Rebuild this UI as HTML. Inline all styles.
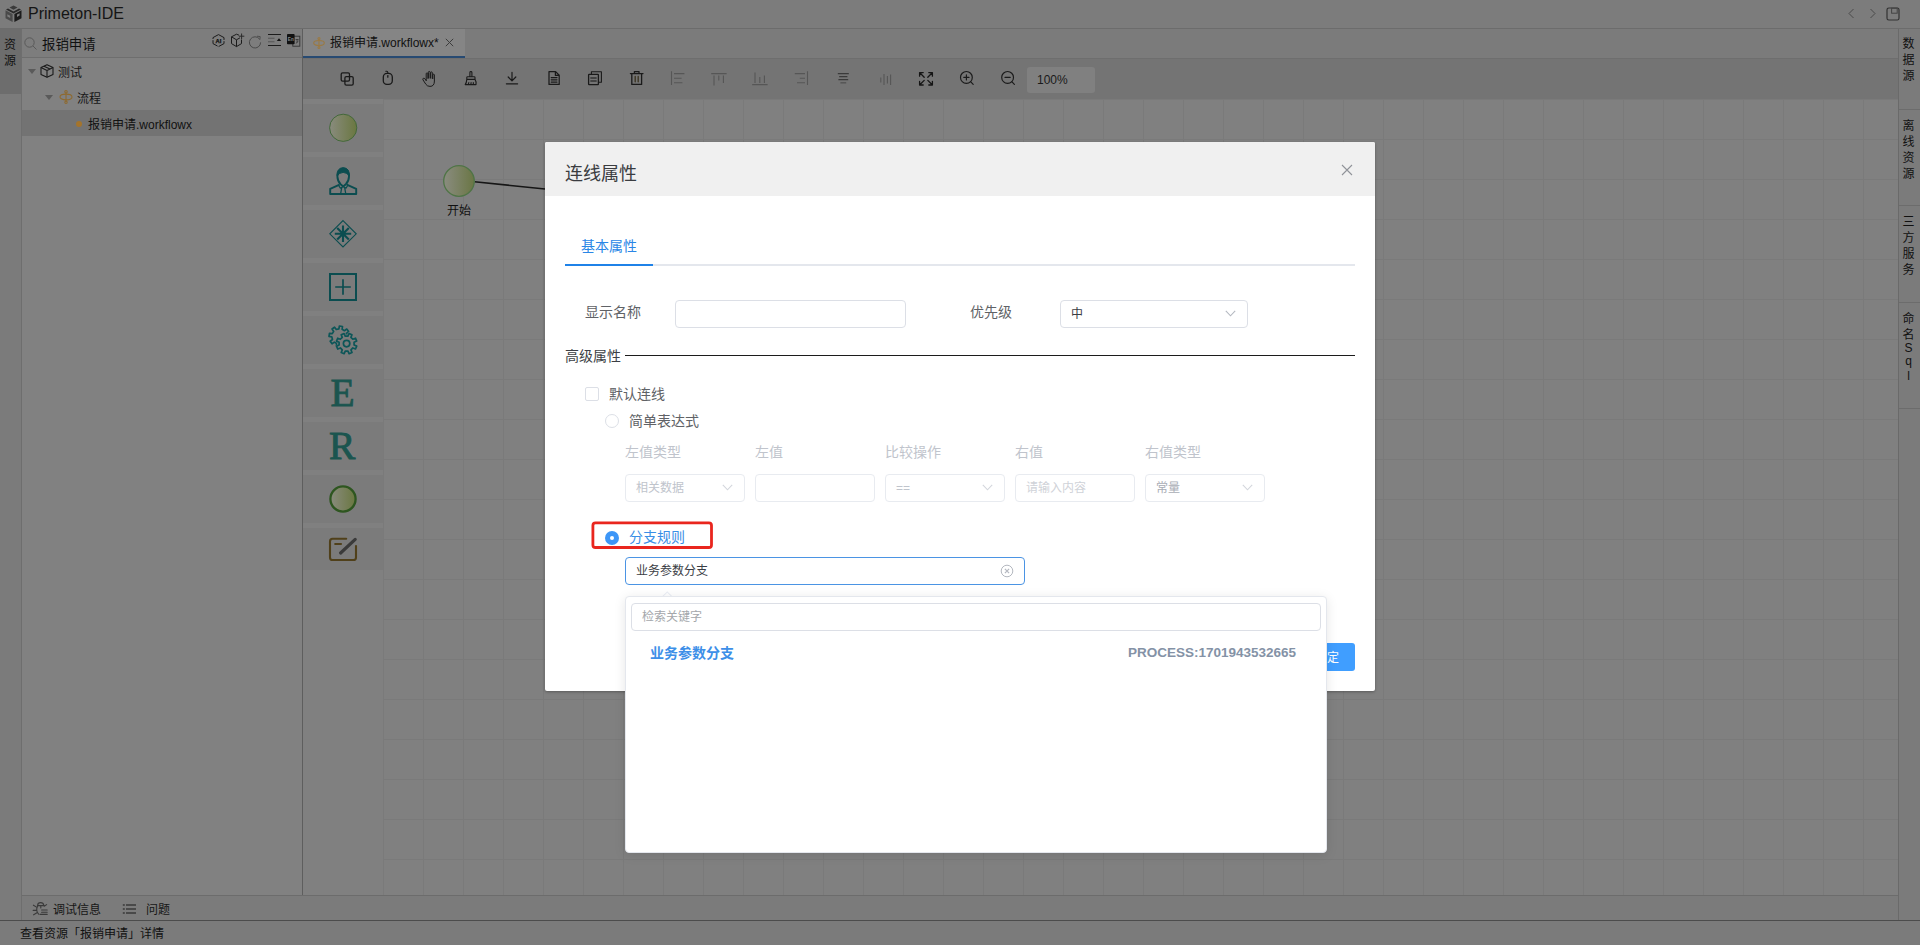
<!DOCTYPE html>
<html lang="zh-CN">
<head>
<meta charset="utf-8">
<title>Primeton-IDE</title>
<style>
*{box-sizing:border-box;margin:0;padding:0}
html,body{width:1920px;height:945px;overflow:hidden}
body{position:relative;background:#7b7b7b;font-family:"Liberation Sans","Noto Sans CJK SC",sans-serif;font-size:12px;color:#000;line-height:1}
.abs{position:absolute}
.t{position:absolute;white-space:nowrap;line-height:1}
svg{position:absolute;overflow:visible}
/* ---------- IDE shell (dimmed by modal mask) ---------- */
#titlebar{left:0;top:0;width:1920px;height:28px;background:#7c7c7c}
#titleline{left:0;top:28px;width:1920px;height:1px;background:#6c6c6c}
#leftstrip{left:0;top:29px;width:21px;height:892px;background:#7b7b7b}
#resTab{left:0;top:29px;width:21px;height:65px;background:#6d6d6d}
#leftstripline{left:21px;top:29px;width:1px;height:892px;background:#6e6e6e}
#leftpanel{left:22px;top:29px;width:280px;height:866px;background:#818181}
#searchrow{left:22px;top:29px;width:280px;height:28px;background:#7d7d7d}
#searchline{left:22px;top:57px;width:280px;height:1px;background:#6e6e6e}
#selrow{left:22px;top:110px;width:280px;height:26px;background:#737373}
#panelline{left:302px;top:29px;width:1px;height:866px;background:#5e5e5e}
#tabbar{left:303px;top:29px;width:1595px;height:29px;background:#7b7b7b}
#tabbarline{left:303px;top:58px;width:1595px;height:1px;background:#6e6e6e}
#acttab{left:303px;top:29px;width:162px;height:27px;background:#858585}
#acttabline{left:303px;top:56px;width:162px;height:2px;background:#274a72}
#toolbar{left:303px;top:59px;width:1595px;height:40px;background:#747474}
#zoombox{left:1027px;top:67px;width:68px;height:26px;background:#808080;border-radius:3px}
#palette{left:303px;top:99px;width:80px;height:796px;background:#808080}
.pi{position:absolute;left:303px;width:80px;height:48px;background:#7b7b7b}
#canvas{left:383px;top:99px;width:1515px;height:796px;background-color:#808080;
 background-image:linear-gradient(to right,#7a7a7a 1px,transparent 1px),linear-gradient(to bottom,#7a7a7a 1px,transparent 1px);
 background-size:40px 40px;background-position:0 0}
#rightline{left:1898px;top:29px;width:1px;height:892px;background:#6a6a6a}
#rightstrip{left:1899px;top:29px;width:21px;height:892px;background:#7b7b7b}
.rsep{position:absolute;left:1899px;width:21px;height:1px;background:#6c6c6c}
#bottomline1{left:22px;top:895px;width:1876px;height:1px;background:#6c6c6c}
#bottomtabs{left:22px;top:896px;width:1876px;height:24px;background:#7b7b7b}
#statusline{left:0;top:920px;width:1920px;height:1px;background:#4c4c4c}
#statusbar{left:0;top:921px;width:1920px;height:24px;background:#7b7b7b}
/* ---------- dialog ---------- */
#dlg{left:545px;top:142px;width:830px;height:549px;background:#fff;border-radius:2px;box-shadow:0 1px 3px rgba(0,0,0,.3)}
#dlghead{left:0;top:0;width:830px;height:54px;background:#f0f0f0;border-radius:2px 2px 0 0}
.inp{position:absolute;height:28px;border:1px solid #dcdfe6;border-radius:4px;background:#fff}
.inp.dis{border-color:#e8ebf0}
.lbl{color:#606266;font-size:14px}
.dl{color:#c0c4cc;font-size:14px}
.dt{color:#c0c4cc;font-size:12px}
#pop{left:625px;top:596px;width:702px;height:257px;background:#fff;border:1px solid #e4e7ed;border-radius:4px;box-shadow:0 2px 12px 0 rgba(0,0,0,.1)}
</style>
</head>
<body>
<!-- shell -->
<div class="abs" id="titlebar"></div>
<div class="abs" id="titleline"></div>
<div class="abs" id="leftstrip"></div>
<div class="abs" id="resTab"></div>
<div class="abs" id="leftstripline"></div>
<div class="abs" id="leftpanel"></div>
<div class="abs" id="searchrow"></div>
<div class="abs" id="searchline"></div>
<div class="abs" id="selrow"></div>
<div class="abs" id="panelline"></div>
<div class="abs" id="tabbar"></div>
<div class="abs" id="tabbarline"></div>
<div class="abs" id="acttab"></div>
<div class="abs" id="acttabline"></div>
<div class="abs" id="toolbar"></div>
<div class="abs" id="zoombox"></div>
<div class="abs" id="palette"></div>
<div class="abs" id="canvas"></div>
<div class="abs" id="rightline"></div>
<div class="abs" id="rightstrip"></div>
<div class="abs" id="bottomline1"></div>
<div class="abs" id="bottomtabs"></div>
<div class="abs" id="statusline"></div>
<div class="abs" id="statusbar"></div>
<!-- title -->
<svg style="left:5px;top:5px" width="17" height="18" viewBox="0 0 17 18">
 <path d="M8.5 0.5 L12.5 2.6 L8.5 4.8 L4.5 2.6Z" fill="#3a3a3a"/>
 <path d="M0.5 5.2 L7.6 9 L7.6 17 L0.5 13.2Z" fill="#4a4a4a"/>
 <path d="M16.5 5.2 L9.4 9 L9.4 17 L16.5 13.2Z" fill="#1c1c1c"/>
 <path d="M3 3.4 L8.5 6.4 L14 3.4 L16 4.5 L8.5 8.4 L1 4.5Z" fill="#2a2a2a"/>
 <path d="M2.3 9.2 L5.2 10.8 L5.2 13 L2.3 11.4Z" fill="#7c7c7c"/>
 <path d="M12 9.6 L14.6 8.2 L14.6 10.6 L12 12Z" fill="#7c7c7c"/>
</svg>
<div class="t" style="left:28px;top:5px;font-size:16px;color:#151515;line-height:18px">Primeton-IDE</div>
<!-- title right icons -->
<svg style="left:1846px;top:7px" width="12" height="13" viewBox="0 0 12 13" fill="none" stroke="#4a4a4a" stroke-width="1"><path d="M7.5 2 L3 6.5 L7.5 11"/></svg>
<svg style="left:1866px;top:7px" width="12" height="13" viewBox="0 0 12 13" fill="none" stroke="#4a4a4a" stroke-width="1"><path d="M4.5 2 L9 6.5 L4.5 11"/></svg>
<svg style="left:1886px;top:7px" width="14" height="14" viewBox="0 0 14 14" fill="none" stroke="#333" stroke-width="1.2"><rect x="1" y="1" width="12" height="12" rx="1.8"/><rect x="5.6" y="1.2" width="5.6" height="5" stroke-width="1" stroke="#444"/></svg>
<!-- left strip -->
<div class="t" style="left:4px;top:38px;font-size:12px;line-height:15.5px;white-space:normal;width:12px;color:#111">资源</div>
<!-- search row -->
<svg style="left:24px;top:37px" width="13" height="13" viewBox="0 0 13 13" fill="none" stroke="#595959" stroke-width="1"><circle cx="5.5" cy="5.5" r="4.7"/><path d="M9 9 L12.5 12.5"/></svg>
<div class="t" style="left:42px;top:37px;font-size:13.4px;line-height:15px;color:#111">报销申请</div>
<svg style="left:211px;top:33px" width="15" height="15" viewBox="0 0 15 15" fill="none" stroke="#1c1c1c" stroke-width="1"><path d="M7.5 1.6 L13 4.6 V10.6 L7.5 13.6 L2 10.6 V4.6Z" stroke-dasharray="8.6 1.2"/><text x="7.5" y="9.6" font-size="5.8" font-weight="bold" text-anchor="middle" fill="#111" stroke="#111" stroke-width="0.25" font-family="Liberation Sans, sans-serif">AI</text></svg>
<svg style="left:230px;top:33px" width="15" height="15" viewBox="0 0 15 15" fill="none" stroke="#1c1c1c" stroke-width="1" stroke-linejoin="round"><path d="M9 2.2 L6.5 1.2 L1.5 3.8 V10.6 L6.5 13.6 L11.5 10.6 V6.5"/><path d="M1.5 3.8 L6.5 6.8 L10 4.8 M6.5 6.8 V13.6"/><path d="M11.6 0.5 V6 M8.9 3.2 H14.3" stroke="#2a2a2a"/></svg>
<svg style="left:248px;top:35px" width="14" height="14" viewBox="0 0 14 14" fill="none" stroke="#4a4a4a" stroke-width="1"><path d="M11.6 4.2 A5.6 5.6 0 1 0 12.6 7.4"/><path d="M9 1.2 L12.2 1.6 L11.8 4.8" stroke-width="0.9"/></svg>
<svg style="left:268px;top:33px" width="14" height="14" viewBox="0 0 14 14" fill="none"><path d="M0 1.5 H13 M0 12.5 H13" stroke="#1c1c1c" stroke-width="1.1"/><path d="M0 5.2 H6.5 M0 8.8 H6.5" stroke="#555" stroke-width="1.1"/><path d="M8.8 8 L11 5.2 L13.2 8Z" fill="#111"/></svg>
<svg style="left:287px;top:33px" width="14" height="14" viewBox="0 0 14 14"><rect x="5.8" y="3.2" width="7" height="10" fill="none" stroke="#333" stroke-width="0.9"/><rect x="0" y="1" width="7.6" height="10.2" rx="0.8" fill="#111"/><text x="3.8" y="7.6" font-size="4.6" font-weight="bold" text-anchor="middle" fill="#8a8a8a" font-family="Liberation Sans, sans-serif">En</text><path d="M8.6 6.5 H11.6 M10.1 6.5 V9.5 M8.8 10.5 L11.5 8" stroke="#333" stroke-width="0.8" fill="none"/></svg>

<!-- tree -->
<svg style="left:28px;top:69px" width="8" height="5" viewBox="0 0 8 5"><path d="M0 0 H8 L4 5Z" fill="#5a5a5a"/></svg>
<svg style="left:40px;top:64px" width="14" height="14" viewBox="0 0 14 14" fill="none" stroke="#1a1a1a" stroke-width="1.1" stroke-linejoin="round"><path d="M7 0.8 L13 3.6 V10.4 L7 13.2 L1 10.4 V3.6Z"/><path d="M1 3.6 L7 6.6 L13 3.6 M7 6.6 V13.2 M4 2.2 L10 5.1"/></svg>
<div class="t" style="left:58px;top:65.5px;font-size:12px;line-height:14px;color:#161616">测试</div>
<svg style="left:45px;top:95px" width="8" height="5" viewBox="0 0 8 5"><path d="M0 0 H8 L4 5Z" fill="#5a5a5a"/></svg>
<svg style="left:59px;top:90px" width="14" height="14" viewBox="0 0 14 14" fill="none" stroke="#8e6a30" stroke-width="1.1"><ellipse cx="7" cy="7" rx="6" ry="2.9"/><circle cx="7" cy="1.7" r="1.2"/><circle cx="7" cy="12.3" r="1.2"/><path d="M7 3 V11"/></svg>
<div class="t" style="left:77px;top:91.5px;font-size:12px;line-height:14px;color:#161616">流程</div>
<div class="abs" style="left:76px;top:121px;width:6px;height:6px;border-radius:50%;background:#a4742c"></div>
<div class="t" style="left:88px;top:118px;font-size:12px;line-height:14px;color:#111">报销申请.workflowx</div>
<!-- editor tab -->
<svg style="left:313px;top:37px" width="12" height="12" viewBox="0 0 12 12" fill="none" stroke="#9a7a44" stroke-width="1.15"><ellipse cx="6" cy="6" rx="5.3" ry="2.5"/><circle cx="6" cy="1.5" r="1"/><circle cx="6" cy="10.5" r="1"/><path d="M6 2.6 V9.4"/></svg>
<div class="t" style="left:330px;top:36px;font-size:12px;line-height:14px;color:#111">报销申请.workflowx*</div>
<svg style="left:445px;top:38px" width="9" height="9" viewBox="0 0 9 9" fill="none" stroke="#3c3c3c" stroke-width="1"><path d="M0.8 0.8 L8.2 8.2 M8.2 0.8 L0.8 8.2"/></svg>
<svg style="left:303px;top:58px" width="800" height="41" viewBox="303 58 800 41" fill="none" stroke="#1a1a1a" stroke-width="1.3" stroke-linecap="round" stroke-linejoin="round">
 <!-- 1 copy -->
 <rect x="341.2" y="72.8" width="8.3" height="8.3" rx="1.4"/>
 <rect x="344.9" y="76.7" width="8.3" height="8.4" rx="1.4"/>
 <!-- 2 mouse -->
 <rect x="383.3" y="73.4" width="9" height="11" rx="3.6"/>
 <path d="M387.8 73.4 V72.4 Q387.8 71.3 386.6 71.3 H385.8" stroke-width="1.1"/>
 <path d="M387.8 75.6 V77.2" stroke-width="1.3"/>
 <!-- 3 hand -->
 <path d="M426.2 80.4 V73.8 Q426.2 72.9 427 72.9 Q427.9 72.9 427.9 73.8 V78.4 M428.4 78 V72.3 Q428.4 71.4 429.25 71.4 Q430.1 71.4 430.1 72.3 V78 M430.6 78 V72.7 Q430.6 71.9 431.45 71.9 Q432.3 71.9 432.3 72.7 V78.4 M432.8 78.6 V75 Q432.8 74.2 433.6 74.2 Q434.4 74.2 434.4 75 V81 Q434.4 86.4 430 86.4 Q427.2 86.4 425.8 84.2 L423 79.9 Q422.4 78.8 423.3 78.3 Q424.2 77.9 424.9 78.8 L426.2 80.6" stroke-width="1"/>
 <!-- 4 broom -->
 <path d="M469.9 76.8 V72.4 Q469.9 71.5 470.9 71.5 Q471.9 71.5 471.9 72.4 V76.8 M467.6 76.8 H474.2 Q475 76.8 475 77.6 V79.4 H466.8 V77.6 Q466.8 76.8 467.6 76.8Z M466.8 79.4 Q466.6 82.6 465.2 84.6 H476 Q476.6 82 475 79.4 M468.3 84.4 L468.8 82.6 M470.9 84.4 L471.1 82.6 M473.4 84.4 L473.3 82.6" stroke-width="1.1"/>
 <!-- 5 download -->
 <path d="M512 72.3 V80.6 M508.2 77 L512 80.8 L515.8 77 M506.4 83.8 H517.6" stroke-width="1.2"/>
 <!-- 6 doc -->
 <path d="M549 71.6 H555.6 L559.2 75.2 V84.4 H549Z M555.4 71.8 V75.4 H559 M551.2 77.6 H557 M551.2 79.8 H557 M551.2 82 H557" stroke-width="1.25"/>
 <!-- 7 copy docs -->
 <rect x="588.6" y="74.4" width="9.8" height="10.2" rx="0.6"/>
 <path d="M591.4 74.2 V71.8 H601.4 V82.2 H598.6" stroke-width="1.1"/>
 <path d="M590.8 78 H596.2 M590.8 81 H596.2" stroke-width="1.3" stroke="#333"/>
 <!-- 8 trash -->
 <path d="M630.4 73.6 H643 M634.4 73.4 V71.6 H639 V73.4 M631.8 73.8 V84.4 H641.6 V73.8" stroke-width="1.3"/>
 <path d="M635.2 76.4 V81.8 M638.2 76.4 V81.8" stroke-width="1.3" stroke="#3a3320"/>
 <g stroke="#565656" stroke-width="1.1" stroke-linecap="butt">
 <!-- 9 align left -->
 <path d="M671.5 71.2 V85 M674 73.6 H684.4 M674 78.2 H681.6 M674 82.8 H682.4"/>
 <!-- 10 align top -->
 <path d="M711.2 73.6 H726.6 M714 75.4 V85.4 M718.8 75.4 V80.6 M723.4 75.4 V83"/>
 <!-- 11 align bottom -->
 <path d="M752.2 84.6 H767.6 M755 72.4 V83 M759.8 77 V83 M764.4 75.4 V83"/>
 <!-- 12 align right -->
 <path d="M807.5 71.2 V85 M794.8 73.6 H805 M799.8 78.2 H805 M797 82.8 H805"/>
 <!-- 13 center lines -->
 <path d="M837.8 73.6 H848.8 M839.2 76.6 H847.4 M838.4 79.6 H848.2" stroke="#3a3a3a"/><path d="M840.4 82.8 H846.2" stroke-width="1.5"/>
 <!-- 14 vertical lines -->
 <path d="M880.8 77.6 V82.4 M884 74 V85 M887.4 76 V83.6 M890.6 74.4 V85"/>
 </g>
 <!-- 15 fullscreen -->
 <g stroke-width="1.3" stroke="#151515">
 <path d="M919.6 76.2 V72.6 H923.2 M919.8 72.8 L924.2 77.2 M932.4 76.2 V72.6 H928.8 M932.2 72.8 L927.8 77.2 M919.6 81.4 V85 H923.2 M919.8 84.8 L924.2 80.4 M932.4 81.4 V85 H928.8 M932.2 84.8 L927.8 80.4"/>
 </g>
 <!-- 16 zoom in -->
 <circle cx="966.4" cy="77.4" r="5.9" stroke-width="1.15"/>
 <path d="M970.8 81.8 L973.2 84.4 M963.8 77.4 H969 M966.4 74.8 V80" stroke-width="1.15"/>
 <!-- 17 zoom out -->
 <circle cx="1007.6" cy="77.4" r="5.9" stroke-width="1.15"/>
 <path d="M1012 81.8 L1014.4 84.4 M1005 77.4 H1010.2" stroke-width="1.15"/>
</svg>

<div class="t" style="left:1037px;top:73px;font-size:12px;line-height:14px;color:#1a1a1a">100%</div>
<div class="pi" style="top:104px"></div>
<div class="pi" style="top:157px"></div>
<div class="pi" style="top:210px"></div>
<div class="pi" style="top:263px"></div>
<div class="pi" style="top:316px"></div>
<div class="pi" style="top:369px"></div>
<div class="pi" style="top:422px"></div>
<div class="pi" style="top:475px"></div>
<div class="pi" style="top:528px;height:42px"></div>
<svg style="left:303px;top:99px" width="80" height="480" viewBox="303 99 80 480" fill="none">
 <defs>
  <linearGradient id="gp" x1="0" y1="0" x2="1" y2="0"><stop offset="0" stop-color="#898b7e"/><stop offset="1" stop-color="#6a7740"/></linearGradient>
  <clipPath id="gclip"><path d="M303 99 H383 V579 H303Z M355.74 344.66 L358.37 345.96 L356.62 350.20 L353.84 349.28 L352.32 350.81 L353.25 353.59 L349.02 355.35 L347.71 352.73 L345.54 352.74 L344.24 355.37 L340.00 353.62 L340.92 350.84 L339.39 349.32 L336.61 350.25 L334.85 346.02 L337.47 344.71 L337.46 342.54 L334.83 341.24 L336.58 337.00 L339.36 337.92 L340.88 336.39 L339.95 333.61 L344.18 331.85 L345.49 334.47 L347.66 334.46 L348.96 331.83 L353.20 333.58 L352.28 336.36 L353.81 337.88 L356.59 336.95 L358.35 341.18 L355.73 342.49Z" clip-rule="evenodd"/></clipPath>
 </defs>
 <circle cx="343.2" cy="127.8" r="13.6" fill="url(#gp)" stroke="#43683a" stroke-width="1"/>
 <!-- person -->
 <g stroke="#0b4d50" stroke-width="1.9" stroke-linejoin="round">
  <path d="M337.4 176.6 Q337.2 170.2 343.2 170.2 Q349.2 170.2 349 176.6 Q348.8 181.4 345.8 184.2 L343.2 186.4 L340.6 184.2 Q337.6 181.4 337.4 176.6Z"/>
  <path d="M337.2 176 Q336.4 168.2 343.2 167.6 Q350 168.2 349.2 176 Q347.4 172.6 343.2 172.4 Q339 172.6 337.2 176Z" fill="#0b4d50" stroke-width="1"/>
  <path d="M339.6 184.6 L330.2 188.8 V194 H356.2 V188.8 L346.8 184.6"/>
  <path d="M341.8 187.2 L340.6 194 M344.6 187.2 L345.8 194" stroke-width="1.3"/>
  <path d="M338.8 185.6 L340.4 188.2 L343.2 186.6 L346 188.2 L347.6 185.6" stroke-width="1.2"/>
 </g>
 <!-- diamond -->
 <g stroke="#0b4d50">
  <path d="M343 220.6 L356.2 233.8 L343 247 L329.8 233.8Z" stroke-width="1.1"/>
  <path d="M343 225.6 V242 M334.8 233.8 H351.2 M337.2 228 L348.8 239.6 M348.8 228 L337.2 239.6" stroke-width="2.1"/>
 </g>
 <!-- plus box -->
 <rect x="330" y="274" width="26" height="26" stroke="#0b4d50" stroke-width="2"/>
 <path d="M343 279.2 V294.8 M335.2 287 H350.8" stroke="#0b4d50" stroke-width="1.7"/>
 <!-- gears -->
 <g stroke="#0d5658" stroke-width="1.7" stroke-linejoin="round">
  <g clip-path="url(#gclip)"><path d="M346.98 335.90 L349.80 336.39 L349.33 339.49 L346.50 339.12 L345.12 341.41 L346.76 343.75 L344.24 345.60 L342.49 343.34 L339.90 343.98 L339.41 346.80 L336.31 346.33 L336.68 343.50 L334.39 342.12 L332.05 343.76 L330.20 341.24 L332.46 339.49 L331.82 336.90 L329.00 336.41 L329.47 333.31 L332.30 333.68 L333.68 331.39 L332.04 329.05 L334.56 327.20 L336.31 329.46 L338.90 328.82 L339.39 326.00 L342.49 326.47 L342.12 329.30 L344.41 330.68 L346.75 329.04 L348.60 331.56 L346.34 333.31Z"/></g>
  <path d="M354.09 344.92 L356.70 346.06 L355.51 348.96 L352.85 347.93 L350.96 349.82 L352.01 352.48 L349.11 353.69 L347.96 351.08 L345.28 351.09 L344.14 353.70 L341.24 352.51 L342.27 349.85 L340.38 347.96 L337.72 349.01 L336.51 346.11 L339.12 344.96 L339.11 342.28 L336.50 341.14 L337.69 338.24 L340.35 339.27 L342.24 337.38 L341.19 334.72 L344.09 333.51 L345.24 336.12 L347.92 336.11 L349.06 333.50 L351.96 334.69 L350.93 337.35 L352.82 339.24 L355.48 338.19 L356.69 341.09 L354.08 342.24Z"/><circle cx="346.6" cy="343.6" r="3.2"/>
 </g>
 <!-- E R -->
 <text x="342.6" y="406" font-family="Liberation Serif, serif" font-size="39.5" fill="#1b554f" stroke="#1b554f" stroke-width="0.9" text-anchor="middle">E</text>
 <text x="342.2" y="459" font-family="Liberation Serif, serif" font-size="39.5" fill="#1b554f" stroke="#1b554f" stroke-width="0.9" text-anchor="middle">R</text>
 <!-- end -->
 <circle cx="343" cy="499" r="12.6" fill="url(#gp)" stroke="#2e5620" stroke-width="2.3"/>
 <!-- edit -->
 <path d="M346.2 538.8 H332.6 Q330 538.8 330 541.4 V557.4 Q330 560 332.6 560 H353.4 Q356 560 356 557.4 V546" stroke="#50401a" stroke-width="2.1" stroke-linecap="round"/>
 <path d="M335.2 544 H341" stroke="#50401a" stroke-width="2.1" stroke-linecap="round"/>
 <path d="M340.6 553 L355.2 539.4" stroke="#3a3a3a" stroke-width="3.2" stroke-linecap="round"/>
</svg>

<!-- canvas node -->
<svg style="left:383px;top:99px" width="200" height="140" viewBox="383 99 200 140">
 <defs><linearGradient id="gs" x1="0" y1="0" x2="1" y2="0"><stop offset="0" stop-color="#8a8c80"/><stop offset="1" stop-color="#6a7644"/></linearGradient></defs>
 <path d="M474.5 181.8 L545 189" stroke="#161616" stroke-width="1.6" fill="none"/>
 <circle cx="459" cy="181" r="15.3" fill="url(#gs)" stroke="#4f7446" stroke-width="1.3"/>
</svg>
<div class="t" style="left:447px;top:204px;font-size:12px;line-height:14px;color:#111">开始</div>
<!-- right strip -->
<div class="t" style="left:1902.5px;top:36.4px;font-size:12px;line-height:16px;white-space:normal;width:12px;color:#111">数据源</div>
<div class="rsep" style="top:109px"></div>
<div class="t" style="left:1902.5px;top:117.5px;font-size:12px;line-height:16px;white-space:normal;width:12px;color:#111">离线资源</div>
<div class="rsep" style="top:205px"></div>
<div class="t" style="left:1902.5px;top:213.6px;font-size:12px;line-height:16px;white-space:normal;width:12px;color:#111">三方服务</div>
<div class="rsep" style="top:302px"></div>
<div class="t" style="left:1902.5px;top:311px;font-size:12px;line-height:16px;white-space:normal;width:12px;color:#111">命名</div><div class="t" style="left:1904.5px;top:341.5px;font-size:12px;line-height:13.8px;width:8px;color:#111;text-align:center">S</div><div class="t" style="left:1904.5px;top:354.5px;font-size:12px;line-height:13.8px;width:8px;color:#111;text-align:center">q</div><div class="t" style="left:1904.5px;top:369.6px;font-size:12px;line-height:13.8px;width:8px;color:#111;text-align:center">l</div>
<div class="rsep" style="top:408px"></div>
<!-- bottom tabs -->
<svg style="left:32px;top:901px" width="16" height="15" viewBox="32 901 16 15" fill="none" stroke="#3a3a3a" stroke-width="1.1" stroke-linecap="round"><path d="M37.6 905.4 Q37.8 902.6 40.6 902.6 Q43.4 902.6 43.8 905.4 M37.4 905.6 H44.4 M37.8 905.8 Q35.2 910.4 38.6 914.2 M37 907.4 L33.4 905.2 M36.4 910.4 L33.2 910.4 M37.4 912.6 L33.6 914.8 M44.2 906.2 L46.6 904.6 M40.8 905.6 V908 M41.6 910 H47.2 M41.6 912.2 H47.2 M40 914.4 H47.2"/></svg>
<div class="t" style="left:53px;top:903px;font-size:12px;line-height:14px;color:#161616">调试信息</div>
<svg style="left:122px;top:903px" width="15" height="12" viewBox="122 903 15 12" fill="none" stroke="#3a3a3a" stroke-width="1.6"><path d="M122.8 905 H124.8 M126 905 H136 M122.8 909 H124.8 M126 909 H136 M122.8 913 H124.8 M126 913 H136"/></svg>
<div class="t" style="left:146px;top:903px;font-size:12px;line-height:14px;color:#161616">问题</div>
<div class="t" style="left:20px;top:926.8px;font-size:12px;line-height:14px;color:#111">查看资源「报销申请」详情</div>

<div class="abs" id="dlg">
 <div class="abs" id="dlghead"></div>
</div>
<div class="t" style="left:565px;top:164px;font-size:18px;line-height:20px;color:#3a3c40">连线属性</div>
<svg style="left:1341px;top:164px" width="12" height="12" viewBox="0 0 12 12" fill="none" stroke="#909399" stroke-width="1.1"><path d="M1 1 L11 11 M11 1 L1 11"/></svg>
<!-- tabs -->
<div class="abs" style="left:565px;top:264px;width:790px;height:2px;background:#e4e7ed"></div>
<div class="abs" style="left:565px;top:264px;width:88px;height:2px;background:#1f82e8"></div>
<div class="t" style="left:581px;top:238px;font-size:14px;line-height:16px;color:#2a86e6">基本属性</div>
<!-- row 1 -->
<div class="t lbl" style="left:585px;top:304px;line-height:16px">显示名称</div>
<div class="inp" style="left:675px;top:300px;width:231px"></div>
<div class="t lbl" style="left:970px;top:304px;line-height:16px">优先级</div>
<div class="inp" style="left:1060px;top:300px;width:188px"></div>
<div class="t" style="left:1071px;top:307px;font-size:12px;line-height:14px;color:#3a3d44">中</div>
<svg style="left:1225px;top:310px" width="11" height="7" viewBox="0 0 11 7" fill="none" stroke="#b4b8c0" stroke-width="1.1"><path d="M0.8 0.8 L5.5 5.8 L10.2 0.8"/></svg>
<!-- advanced -->
<div class="t" style="left:565px;top:348px;font-size:14px;line-height:16px;color:#3c3f45">高级属性</div>
<div class="abs" style="left:625px;top:355px;width:730px;height:1px;background:#1c1c1c"></div>
<div class="abs" style="left:585px;top:387px;width:14px;height:14px;border:1px solid #dcdfe6;border-radius:2px;background:#fff"></div>
<div class="t lbl" style="left:609px;top:386px;line-height:16px">默认连线</div>
<div class="abs" style="left:605px;top:414px;width:14px;height:14px;border:1px solid #dcdfe6;border-radius:50%;background:#fff"></div>
<div class="t lbl" style="left:629px;top:413px;line-height:16px">简单表达式</div>
<!-- disabled expression row -->
<div class="t dl" style="left:625px;top:444px;line-height:16px">左值类型</div>
<div class="t dl" style="left:755px;top:444px;line-height:16px">左值</div>
<div class="t dl" style="left:885px;top:444px;line-height:16px">比较操作</div>
<div class="t dl" style="left:1015px;top:444px;line-height:16px">右值</div>
<div class="t dl" style="left:1145px;top:444px;line-height:16px">右值类型</div>
<div class="inp dis" style="left:625px;top:474px;width:120px"></div>
<div class="inp dis" style="left:755px;top:474px;width:120px"></div>
<div class="inp dis" style="left:885px;top:474px;width:120px"></div>
<div class="inp dis" style="left:1015px;top:474px;width:120px"></div>
<div class="inp dis" style="left:1145px;top:474px;width:120px"></div>
<div class="t dt" style="left:636px;top:481px;line-height:14px">相关数据</div>
<div class="t dt" style="left:896px;top:481px;line-height:14px">==</div>
<div class="t dt" style="left:1026px;top:481px;line-height:14px;color:#cfd2d8">请输入内容</div>
<div class="t dt" style="left:1156px;top:481px;line-height:14px;color:#a9adb5">常量</div>
<svg style="left:722px;top:484px" width="11" height="7" viewBox="0 0 11 7" fill="none" stroke="#d3d6dc" stroke-width="1.1"><path d="M0.8 0.8 L5.5 5.8 L10.2 0.8"/></svg>
<svg style="left:982px;top:484px" width="11" height="7" viewBox="0 0 11 7" fill="none" stroke="#d3d6dc" stroke-width="1.1"><path d="M0.8 0.8 L5.5 5.8 L10.2 0.8"/></svg>
<svg style="left:1242px;top:484px" width="11" height="7" viewBox="0 0 11 7" fill="none" stroke="#d3d6dc" stroke-width="1.1"><path d="M0.8 0.8 L5.5 5.8 L10.2 0.8"/></svg>
<!-- branch rule -->
<svg style="left:590px;top:520px" width="126" height="32" viewBox="590 520 126 32"><rect x="592.9" y="522.9" width="118.6" height="24.6" rx="2.6" fill="none" stroke="#e9261e" stroke-width="2.8"/></svg>
<div class="abs" style="left:605px;top:531px;width:14px;height:14px;border-radius:50%;background:#3d96f7"></div>
<div class="abs" style="left:610px;top:536px;width:4px;height:4px;border-radius:50%;background:#fff"></div>
<div class="t" style="left:629px;top:529px;font-size:14px;line-height:16px;color:#3a8ee6">分支规则</div>
<div class="inp" style="left:625px;top:557px;width:400px;border-color:#4b94e4"></div>
<div class="t" style="left:636px;top:564px;font-size:12px;line-height:14px;color:#3a3d44">业务参数分支</div>
<svg style="left:1000px;top:564px" width="14" height="14" viewBox="0 0 14 14" fill="none" stroke="#b4b8c0" stroke-width="1"><circle cx="7" cy="7" r="5.8"/><path d="M4.9 4.9 L9.1 9.1 M9.1 4.9 L4.9 9.1" stroke-width="1.2"/></svg>
<!-- confirm button (mostly hidden) -->
<div class="abs" style="left:1299px;top:643px;width:56px;height:28px;background:#409eff;border-radius:3px"></div>
<div class="t" style="left:1315px;top:651px;font-size:12px;line-height:14px;color:#fff">确定</div>
<!-- popper -->
<div class="abs" style="left:662.5px;top:592.5px;width:8.5px;height:8.5px;background:#fff;border:1px solid #ebeef5;transform:rotate(45deg);transform-origin:center"></div>
<div class="abs" id="pop"></div>
<div class="abs" style="left:660px;top:597px;width:14px;height:5px;background:#fff"></div>
<div class="inp" style="left:631px;top:603px;width:690px"></div>
<div class="t" style="left:642px;top:610px;font-size:12px;line-height:14px;color:#a4a7ab">检索关键字</div>
<div class="t" style="left:650px;top:645px;font-size:14px;line-height:16px;color:#3d8fe8;font-weight:bold">业务参数分支</div>
<div class="t" style="left:1128px;top:645px;font-size:13.5px;line-height:16px;color:#8492a6;font-weight:bold">PROCESS:1701943532665</div>

</body>
</html>
